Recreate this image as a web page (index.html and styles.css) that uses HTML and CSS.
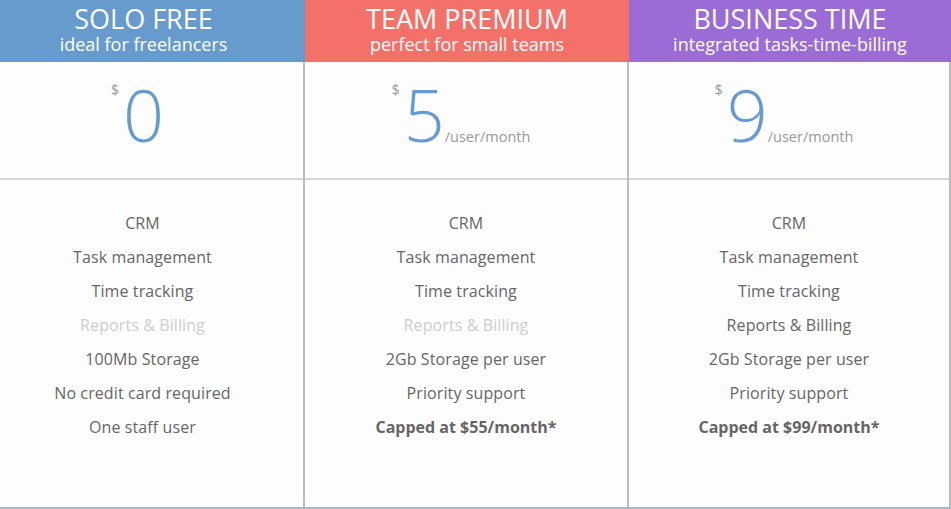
FILE: index.html
```html
<!DOCTYPE html>
<html>
<head>
<meta charset="utf-8">
<link rel="stylesheet" href="styles.css">
</head>
<body>
<div class="pricing">
  <div class="plan plan-first">
    <div class="head head-blue">
      <div class="title">SOLO FREE</div>
      <div class="sub">ideal for freelancers</div>
    </div>
    <div class="body">
      <div class="price">
        <span class="cur">$</span><span class="amount">0</span>
      </div>
      <ul class="features">
        <li>CRM</li>
        <li>Task management</li>
        <li>Time tracking</li>
        <li class="off">Reports &amp; Billing</li>
        <li>100Mb Storage</li>
        <li>No credit card required</li>
        <li>One staff user</li>
      </ul>
    </div>
  </div>
  <div class="plan">
    <div class="head head-red">
      <div class="title">TEAM PREMIUM</div>
      <div class="sub">perfect for small teams</div>
    </div>
    <div class="body">
      <div class="price">
        <span class="cur">$</span><span class="amount">5</span><span class="per">/user/month</span>
      </div>
      <ul class="features">
        <li>CRM</li>
        <li>Task management</li>
        <li>Time tracking</li>
        <li class="off">Reports &amp; Billing</li>
        <li>2Gb Storage per user</li>
        <li>Priority support</li>
        <li class="strong">Capped at $55/month*</li>
      </ul>
    </div>
  </div>
  <div class="plan">
    <div class="head head-purple">
      <div class="title">BUSINESS TIME</div>
      <div class="sub">integrated tasks-time-billing</div>
    </div>
    <div class="body">
      <div class="price">
        <span class="cur">$</span><span class="amount">9</span><span class="per">/user/month</span>
      </div>
      <ul class="features">
        <li>CRM</li>
        <li>Task management</li>
        <li>Time tracking</li>
        <li>Reports &amp; Billing</li>
        <li>2Gb Storage per user</li>
        <li>Priority support</li>
        <li class="strong">Capped at $99/month*</li>
      </ul>
    </div>
  </div>
</div>
</body>
</html>
```
FILE: styles.css
```css
html, body {
  margin: 0;
  padding: 0;
  background: #fdfdfd;
  font-family: "Open Sans", "Liberation Sans", sans-serif;
}
.pricing {
  display: grid;
  grid-template-columns: 305px 324px 322px;
  width: 951px;
  height: 509px;
  box-sizing: border-box;
  border-bottom: 2px solid #aab8ca;
}
.plan {
  display: flex;
  flex-direction: column;
  min-height: 0;
}
.head {
  height: 62px;
  box-sizing: border-box;
  color: #fff;
  text-align: center;
  padding-top: 3px;
}
.head-blue { background: #679bcd; }
.head-red { background: #f4716a; }
.head-purple { background: #9c6cd6; }
.title {
  font-size: 27px;
  line-height: 31px;
}
.sub {
  font-size: 18px;
  line-height: 21px;
}
.body {
  flex: 1;
  border-right: 2px solid #bcbcbc;
  display: flex;
  flex-direction: column;
}
.price {
  height: 118px;
  flex: none;
  box-sizing: border-box;
  border-bottom: 2px solid #d6d6d6;
  display: flex;
  justify-content: center;
  align-items: flex-start;
  padding-top: 14px;
  padding-right: 10px;
}
.plan-first .head,
.plan-first .features {
  padding-right: 18px;
}
.plan-first .price {
  padding-right: 28px;
}
.cur {
  font-size: 14px;
  color: #999;
  line-height: 20px;
  margin-top: 4px;
  margin-right: 4px;
}
.amount {
  font-size: 72px;
  font-weight: 300;
  color: #659bd1;
  line-height: 76px;
}
.per {
  font-size: 14.5px;
  color: #999;
  margin-top: 51px;
  margin-left: 0;
  line-height: 20px;
}
.features {
  list-style: none;
  margin: 0;
  padding: 26px 0 0 0;
  text-align: center;
}
.features li {
  font-size: 16px;
  line-height: 34px;
  color: #666;
  letter-spacing: 0.1px;
}
.features li.off {
  color: #cdcdcd;
}
.features li.strong {
  font-weight: 700;
  letter-spacing: 0;
}
```
